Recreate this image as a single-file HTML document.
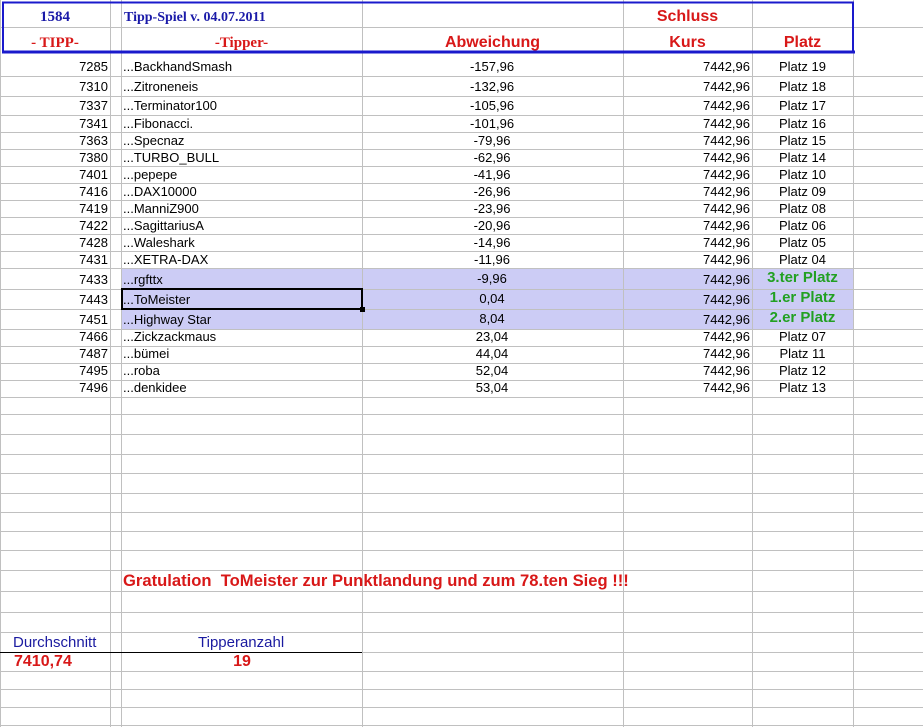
<!DOCTYPE html>
<html><head><meta charset="utf-8"><style>
body{margin:0;width:923px;height:727px;overflow:hidden;background:#fff;position:relative;font-family:"Liberation Sans",Arial,sans-serif;}
.t{position:absolute;font-size:13px;line-height:14px;color:#000;white-space:nowrap;}
.r{text-align:right}
.c{text-align:center}
.h{position:absolute;font-weight:bold;white-space:nowrap;}
.ser{font-family:"Liberation Serif",serif;color:#1a1aa8;font-size:14px}
.red{color:#d81818;font-size:16px;font-family:"Liberation Sans",sans-serif}
.g{color:#22a022;font-weight:bold;font-size:15px}
</style></head><body>
<svg width="923" height="727" style="position:absolute;left:0;top:0">
<rect x="121" y="268" width="732" height="61" fill="#ccccf5"/>
<g stroke="#c0c0c0" stroke-width="1" shape-rendering="crispEdges">
<line x1="0.5" y1="0" x2="0.5" y2="727"/>
<line x1="110.5" y1="0" x2="110.5" y2="727"/>
<line x1="121.5" y1="0" x2="121.5" y2="727"/>
<line x1="362.5" y1="0" x2="362.5" y2="727"/>
<line x1="623.5" y1="0" x2="623.5" y2="727"/>
<line x1="752.5" y1="0" x2="752.5" y2="727"/>
<line x1="853.5" y1="0" x2="853.5" y2="727"/>
<line x1="0" y1="27.5" x2="923" y2="27.5"/>
</g>
<g stroke="#c0c0c0" shape-rendering="crispEdges">
<path d="M0 76.5H923M0 96.5H923M0 115.5H923M0 132.5H923M0 149.5H923M0 166.5H923M0 183.5H923M0 200.5H923M0 217.5H923M0 234.5H923M0 251.5H923M0 268.5H923M0 289.5H923M0 309.5H923M0 329.5H923M0 346.5H923M0 363.5H923M0 380.5H923M0 397.5H923M0 414.5H923M0 434.5H923M0 454.5H923M0 473.5H923M0 493.5H923M0 512.5H923M0 531.5H923M0 550.5H923M0 570.5H923M0 591.5H923M0 612.5H923M0 632.5H923M0 652.5H923M0 671.5H923M0 689.5H923M0 707.5H923M0 725.5H923"/>
</g>
<rect x="3" y="2.5" width="850" height="50" fill="none" stroke="#1a1acc" stroke-width="2"/>
<line x1="2" y1="52" x2="855" y2="52" stroke="#1a1acc" stroke-width="3"/>
<line x1="0" y1="652.5" x2="362" y2="652.5" stroke="#000" stroke-width="1"/>
<rect x="122" y="289" width="240" height="20" fill="none" stroke="#000" stroke-width="2"/>
<rect x="360" y="307" width="5" height="5" fill="#000"/>
</svg>

<div class="h ser" style="left:0;width:110px;text-align:center;top:9px;font-size:15px">1584</div>
<div class="h ser" style="left:124px;top:10px;font-size:14px">Tipp-Spiel v. 04.07.2011</div>
<div class="h" style="left:0;width:110px;text-align:center;top:35px;color:#d81818;font-family:'Liberation Serif',serif;font-size:15px">- TIPP-</div>
<div class="h" style="left:121px;width:241px;text-align:center;top:35px;color:#d81818;font-family:'Liberation Serif',serif;font-size:15px">-Tipper-</div>
<div class="h red" style="left:362px;width:261px;text-align:center;top:34px">Abweichung</div>
<div class="h red" style="left:623px;width:129px;text-align:center;top:8px">Schluss</div>
<div class="h red" style="left:623px;width:129px;text-align:center;top:34px">Kurs</div>
<div class="h red" style="left:752px;width:101px;text-align:center;top:34px">Platz</div>

<div class="t r" style="left:0;width:108px;top:60px">7285</div><div class="t" style="left:123px;top:60px">...BackhandSmash</div><div class="t c" style="left:392px;width:200px;top:60px">-157,96</div><div class="t r" style="left:623px;width:127px;top:60px">7442,96</div><div class="t c" style="left:752px;width:101px;top:60px">Platz 19</div>
<div class="t r" style="left:0;width:108px;top:80px">7310</div><div class="t" style="left:123px;top:80px">...Zitroneneis</div><div class="t c" style="left:392px;width:200px;top:80px">-132,96</div><div class="t r" style="left:623px;width:127px;top:80px">7442,96</div><div class="t c" style="left:752px;width:101px;top:80px">Platz 18</div>
<div class="t r" style="left:0;width:108px;top:99px">7337</div><div class="t" style="left:123px;top:99px">...Terminator100</div><div class="t c" style="left:392px;width:200px;top:99px">-105,96</div><div class="t r" style="left:623px;width:127px;top:99px">7442,96</div><div class="t c" style="left:752px;width:101px;top:99px">Platz 17</div>
<div class="t r" style="left:0;width:108px;top:117px">7341</div><div class="t" style="left:123px;top:117px">...Fibonacci.</div><div class="t c" style="left:392px;width:200px;top:117px">-101,96</div><div class="t r" style="left:623px;width:127px;top:117px">7442,96</div><div class="t c" style="left:752px;width:101px;top:117px">Platz 16</div>
<div class="t r" style="left:0;width:108px;top:134px">7363</div><div class="t" style="left:123px;top:134px">...Specnaz</div><div class="t c" style="left:392px;width:200px;top:134px">-79,96</div><div class="t r" style="left:623px;width:127px;top:134px">7442,96</div><div class="t c" style="left:752px;width:101px;top:134px">Platz 15</div>
<div class="t r" style="left:0;width:108px;top:151px">7380</div><div class="t" style="left:123px;top:151px">...TURBO_BULL</div><div class="t c" style="left:392px;width:200px;top:151px">-62,96</div><div class="t r" style="left:623px;width:127px;top:151px">7442,96</div><div class="t c" style="left:752px;width:101px;top:151px">Platz 14</div>
<div class="t r" style="left:0;width:108px;top:168px">7401</div><div class="t" style="left:123px;top:168px">...pepepe</div><div class="t c" style="left:392px;width:200px;top:168px">-41,96</div><div class="t r" style="left:623px;width:127px;top:168px">7442,96</div><div class="t c" style="left:752px;width:101px;top:168px">Platz 10</div>
<div class="t r" style="left:0;width:108px;top:185px">7416</div><div class="t" style="left:123px;top:185px">...DAX10000</div><div class="t c" style="left:392px;width:200px;top:185px">-26,96</div><div class="t r" style="left:623px;width:127px;top:185px">7442,96</div><div class="t c" style="left:752px;width:101px;top:185px">Platz 09</div>
<div class="t r" style="left:0;width:108px;top:202px">7419</div><div class="t" style="left:123px;top:202px">...ManniZ900</div><div class="t c" style="left:392px;width:200px;top:202px">-23,96</div><div class="t r" style="left:623px;width:127px;top:202px">7442,96</div><div class="t c" style="left:752px;width:101px;top:202px">Platz 08</div>
<div class="t r" style="left:0;width:108px;top:219px">7422</div><div class="t" style="left:123px;top:219px">...SagittariusA</div><div class="t c" style="left:392px;width:200px;top:219px">-20,96</div><div class="t r" style="left:623px;width:127px;top:219px">7442,96</div><div class="t c" style="left:752px;width:101px;top:219px">Platz 06</div>
<div class="t r" style="left:0;width:108px;top:236px">7428</div><div class="t" style="left:123px;top:236px">...Waleshark</div><div class="t c" style="left:392px;width:200px;top:236px">-14,96</div><div class="t r" style="left:623px;width:127px;top:236px">7442,96</div><div class="t c" style="left:752px;width:101px;top:236px">Platz 05</div>
<div class="t r" style="left:0;width:108px;top:253px">7431</div><div class="t" style="left:123px;top:253px">...XETRA-DAX</div><div class="t c" style="left:392px;width:200px;top:253px">-11,96</div><div class="t r" style="left:623px;width:127px;top:253px">7442,96</div><div class="t c" style="left:752px;width:101px;top:253px">Platz 04</div>
<div class="t r" style="left:0;width:108px;top:273px">7433</div><div class="t" style="left:123px;top:273px">...rgfttx</div><div class="t c" style="left:392px;width:200px;top:272px">-9,96</div><div class="t r" style="left:623px;width:127px;top:273px">7442,96</div><div class="t c g" style="left:752px;width:101px;top:271px">3.ter Platz</div>
<div class="t r" style="left:0;width:108px;top:293px">7443</div><div class="t" style="left:123px;top:293px">...ToMeister</div><div class="t c" style="left:392px;width:200px;top:292px">0,04</div><div class="t r" style="left:623px;width:127px;top:293px">7442,96</div><div class="t c g" style="left:752px;width:101px;top:291px">1.er Platz</div>
<div class="t r" style="left:0;width:108px;top:313px">7451</div><div class="t" style="left:123px;top:313px">...Highway Star</div><div class="t c" style="left:392px;width:200px;top:312px">8,04</div><div class="t r" style="left:623px;width:127px;top:313px">7442,96</div><div class="t c g" style="left:752px;width:101px;top:311px">2.er Platz</div>
<div class="t r" style="left:0;width:108px;top:330px">7466</div><div class="t" style="left:123px;top:330px">...Zickzackmaus</div><div class="t c" style="left:392px;width:200px;top:330px">23,04</div><div class="t r" style="left:623px;width:127px;top:330px">7442,96</div><div class="t c" style="left:752px;width:101px;top:330px">Platz 07</div>
<div class="t r" style="left:0;width:108px;top:347px">7487</div><div class="t" style="left:123px;top:347px">...bümei</div><div class="t c" style="left:392px;width:200px;top:347px">44,04</div><div class="t r" style="left:623px;width:127px;top:347px">7442,96</div><div class="t c" style="left:752px;width:101px;top:347px">Platz 11</div>
<div class="t r" style="left:0;width:108px;top:364px">7495</div><div class="t" style="left:123px;top:364px">...roba</div><div class="t c" style="left:392px;width:200px;top:364px">52,04</div><div class="t r" style="left:623px;width:127px;top:364px">7442,96</div><div class="t c" style="left:752px;width:101px;top:364px">Platz 12</div>
<div class="t r" style="left:0;width:108px;top:381px">7496</div><div class="t" style="left:123px;top:381px">...denkidee</div><div class="t c" style="left:392px;width:200px;top:381px">53,04</div><div class="t r" style="left:623px;width:127px;top:381px">7442,96</div><div class="t c" style="left:752px;width:101px;top:381px">Platz 13</div>

<div class="h" style="left:123px;top:571px;font-size:16.6px;color:#d81818">Gratulation&nbsp; ToMeister zur Punktlandung und zum 78.ten Sieg !!!</div>
<div class="t" style="left:13px;top:636px;font-size:15px;color:#1a1aa0">Durchschnitt</div>
<div class="t" style="left:198px;top:636px;font-size:15px;color:#1a1aa0">Tipperanzahl</div>
<div class="h" style="left:14px;top:653px;font-size:16px;color:#d81818">7410,74</div>
<div class="h" style="left:222px;width:40px;text-align:center;top:653px;font-size:16px;color:#d81818">19</div>
</body></html>
